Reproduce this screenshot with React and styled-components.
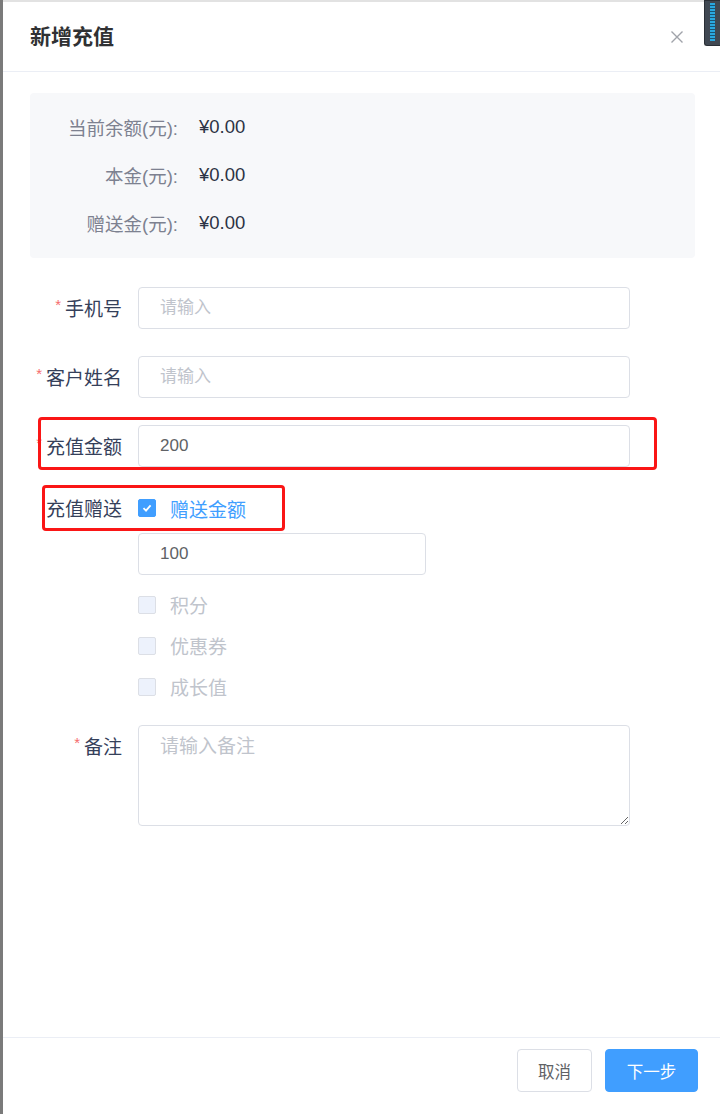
import React from 'react';
import styled, { createGlobalStyle } from 'styled-components';

const GlobalStyle = createGlobalStyle`
  html, body {
    margin: 0;
    padding: 0;
    background: #7a7a7a;
    font-family: "Liberation Sans", "Noto Sans CJK SC", sans-serif;
  }
  * { box-sizing: border-box; }
`;

const Dialog = styled.div`
  position: relative;
  margin-left: 3px;
  width: 717px;
  height: 1114px;
  background: #fff;
  border-top: 2px solid #e2e2e2;
  display: flex;
  flex-direction: column;
`;

const Header = styled.div`
  height: 70px;
  flex-shrink: 0;
  display: flex;
  align-items: center;
  justify-content: space-between;
  padding: 0 36px 0 27px;
  border-bottom: 1px solid #ebeef5;
`;

const Title = styled.h2`
  margin: 0;
  font-size: 21px;
  font-weight: 700;
  color: #303133;
  line-height: 28px;
`;

const CloseBtn = styled.button`
  border: 0;
  background: none;
  padding: 0;
  width: 14px;
  height: 14px;
  display: flex;
  cursor: pointer;
`;

const Gadget = styled.div`
  position: absolute;
  top: -2px;
  right: 0;
  width: 16px;
  height: 46px;
  background: #404852;
  border: 1px solid #2a2f36;
  border-right: 0;
  border-radius: 0 0 0 3px;
  display: flex;
  justify-content: center;
  padding-top: 2px;
`;

const GadgetDots = styled.div`
  width: 5px;
  height: 38px;
  background: repeating-linear-gradient(to bottom, #2aa8e0 0 2px, #1a5574 2px 3px);
`;

const Body = styled.div`
  flex: 1;
  padding: 21px 25px 0 27px;
`;

const InfoBox = styled.div`
  background: #f7f8fa;
  border-radius: 4px;
  padding: 22px 0 23px;
  display: flex;
  flex-direction: column;
  gap: 24px;
`;

const InfoRow = styled.div`
  display: flex;
  align-items: center;
  height: 24px;
  font-size: 18.5px;
`;

const InfoLabel = styled.span`
  width: 148px;
  text-align: right;
  color: #7d8190;
`;

const InfoValue = styled.span`
  margin-left: 21px;
  color: #2c3344;
`;

const Form = styled.div`
  margin-top: 29px;
  display: flex;
  flex-direction: column;
`;

const Item = styled.div`
  position: relative;
  display: flex;
  align-items: flex-start;
  margin-bottom: ${p => p.$mb ?? 27}px;
`;

const Label = styled.label`
  width: 108px;
  height: ${p => p.$h ?? 42}px;
  flex-shrink: 0;
  padding: 0 16px 2px 0;
  display: flex;
  align-items: center;
  justify-content: flex-end;
  font-size: 19px;
  color: #35405a;
  white-space: nowrap;
`;

const Star = styled.span`
  color: #f56c6c;
  font-size: 15px;
  margin-right: 4px;
  position: relative;
  top: -3px;
`;

const Control = styled.div`
  display: flex;
  flex-direction: column;
`;

const Input = styled.input`
  width: ${p => p.$w ?? 492}px;
  height: 42px;
  flex-shrink: 0;
  border: 1px solid #dcdfe6;
  border-radius: 4px;
  padding: 0 21px;
  font-family: inherit;
  font-size: 17px;
  color: #606266;
  outline: none;
  &::placeholder { color: #c0c4cc; }
`;

const TextArea = styled.textarea`
  width: 492px;
  height: 101px;
  border: 1px solid #dcdfe6;
  border-radius: 4px;
  padding: 8px 21px;
  font-family: inherit;
  font-size: 19px;
  line-height: 26px;
  color: #606266;
  outline: none;
  resize: vertical;
  display: block;
  &::placeholder { color: #c0c4cc; }
`;

const CheckRow = styled.label`
  display: flex;
  align-items: center;
  height: ${p => p.$h ?? 41}px;
  gap: 14px;
  font-size: 19px;
  color: ${p => (p.$disabled ? '#c0c4cc' : '#409eff')};
`;

const Box = styled.span`
  width: 18px;
  height: 18px;
  border-radius: 2px;
  display: flex;
  align-items: center;
  justify-content: center;
  background: ${p => (p.$checked ? '#409eff' : '#edf2fc')};
  border: 1px solid ${p => (p.$checked ? '#409eff' : '#dcdfe6')};
`;

const GiftInput = styled(Input)`
  margin-top: 11px;
`;

const SubList = styled.div`
  margin-top: 9px;
  display: flex;
  flex-direction: column;
`;

const Highlight = styled.div`
  position: absolute;
  left: ${p => p.$l}px;
  top: ${p => p.$t}px;
  width: ${p => p.$w}px;
  height: ${p => p.$h}px;
  border: 3px solid #fa1616;
  border-radius: 4px;
  pointer-events: none;
`;

const Footer = styled.div`
  border-top: 1px solid #ebeef5;
  height: 77px;
  flex-shrink: 0;
  padding: 11px 22px 0 0;
  display: flex;
  justify-content: flex-end;
  gap: 13px;
`;

const Button = styled.button`
  height: 43px;
  width: ${p => p.$w}px;
  border-radius: 4px;
  font-family: inherit;
  font-size: 16.5px;
  cursor: pointer;
  border: 1px solid ${p => (p.$primary ? '#409eff' : '#dcdfe6')};
  background: ${p => (p.$primary ? '#409eff' : '#fff')};
  color: ${p => (p.$primary ? '#fff' : '#606266')};
`;

const Check = () => (
  <svg width="12" height="12" viewBox="0 0 12 12">
    <path d="M2.5 6.2 L5 8.6 L9.6 3.4" fill="none" stroke="#fff" strokeWidth="1.8" />
  </svg>
);

const info = [
  ['当前余额(元):', '¥0.00'],
  ['本金(元):', '¥0.00'],
  ['赠送金(元):', '¥0.00'],
];

const extras = ['积分', '优惠券', '成长值'];

export default function App() {
  return (
    <>
      <GlobalStyle />
      <Dialog>
        <Header>
          <Title>新增充值</Title>
          <CloseBtn aria-label="close">
            <svg width="14" height="14" viewBox="0 0 14 14">
              <path d="M1.5 1.5 L12.5 12.5 M12.5 1.5 L1.5 12.5" stroke="#a0a3aa" strokeWidth="1.4" />
            </svg>
          </CloseBtn>
        </Header>
        <Gadget><GadgetDots /></Gadget>

        <Body>
          <InfoBox>
            {info.map(([k, v]) => (
              <InfoRow key={k}>
                <InfoLabel>{k}</InfoLabel>
                <InfoValue>{v}</InfoValue>
              </InfoRow>
            ))}
          </InfoBox>

          <Form>
            <Item>
              <Label><Star>*</Star>手机号</Label>
              <Input placeholder="请输入" />
            </Item>
            <Item>
              <Label><Star>*</Star>客户姓名</Label>
              <Input placeholder="请输入" />
            </Item>
            <Item>
              <Label><Star>*</Star>充值金额</Label>
              <Input defaultValue="200" />
              <Highlight $l={8} $t={-8} $w={619} $h={53} />
            </Item>
            <Item $mb={18}>
              <Label $h={28}>充值赠送</Label>
              <Control>
                <CheckRow $h={28}>
                  <Box $checked><Check /></Box>
                  赠送金额
                </CheckRow>
                <GiftInput $w={288} defaultValue="100" />
                <SubList>
                  {extras.map(t => (
                    <CheckRow key={t} $disabled>
                      <Box />
                      {t}
                    </CheckRow>
                  ))}
                </SubList>
              </Control>
              <Highlight $l={12} $t={-9} $w={243} $h={46} />
            </Item>
            <Item>
              <Label><Star>*</Star>备注</Label>
              <TextArea placeholder="请输入备注" />
            </Item>
          </Form>
        </Body>

        <Footer>
          <Button $w={75}>取消</Button>
          <Button $w={93} $primary>下一步</Button>
        </Footer>
      </Dialog>
    </>
  );
}
